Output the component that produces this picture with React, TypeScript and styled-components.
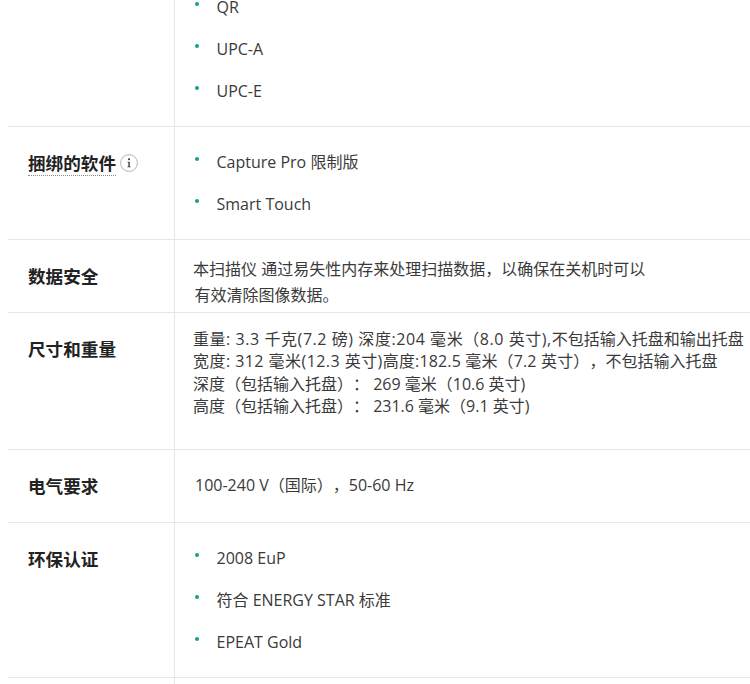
import React from "react";
import styled, { createGlobalStyle } from "styled-components";

const Global = createGlobalStyle`
  html, body { margin: 0; padding: 0; background: #fff; }
  body {
    font-family: "Open Sans", "Noto Sans CJK SC", sans-serif;
    color: #333;
    text-spacing-trim: space-all;
  }
`;

const Viewport = styled.div`
  width: 750px;
  height: 684px;
  overflow: hidden;
  padding-left: 8px;
  box-sizing: border-box;
`;

const Table = styled.div`
  width: 742px;
`;

const Row = styled.div<{ $height: number }>`
  display: grid;
  grid-template-columns: 166px 1fr;
  height: ${(p) => p.$height}px;
  border-bottom: 1px solid #e6e6e6;
  box-sizing: border-box;
`;

const Label = styled.div<{ $top: number }>`
  padding: ${(p) => p.$top}px 0 0 20px;
  font-size: 17.6px;
  line-height: 24px;
  font-weight: 700;
  color: #222;
  display: flex;
  align-items: flex-start;
  gap: 4px;
`;

const Dotted = styled.span`
  border-bottom: 1px dotted #888;
  height: 24px;
`;

const InfoIcon = styled.svg`
  width: 18px;
  height: 18px;
  margin-top: 3px;
  flex: none;
`;

const Cell = styled.div<{ $top: number; $left?: number }>`
  border-left: 1px solid #e6e6e6;
  padding: ${(p) => p.$top}px 0 0 ${(p) => p.$left ?? 18}px;
  font-size: 16px;
  color: #3a3a3a;
`;

const BulletList = styled.ul<{ $shift?: number }>`
  list-style: none;
  margin: ${(p) => p.$shift ?? 0}px 0 0;
  padding: 0;
  display: flex;
  flex-direction: column;
  gap: 18px;
`;

const Bullet = styled.li`
  position: relative;
  padding-left: 23.5px;
  line-height: 24px;
  &::before {
    content: "";
    position: absolute;
    left: 2px;
    top: 7px;
    width: 4px;
    height: 4px;
    border-radius: 50%;
    background: #1a9e8f;
  }
`;

const Para = styled.div<{ $lh: number }>`
  line-height: ${(p) => p.$lh}px;
  font-size: 16px;
  white-space: nowrap;
  margin-right: -8px;
`;

const Tracked = styled.span<{ $spacing: number }>`
  letter-spacing: ${(p) => p.$spacing}px;
`;

const Indented = styled.span`
  margin-left: 1.5px;
`;

function List({ items, shift }: { items: string[]; shift?: number }) {
  return (
    <BulletList $shift={shift}>
      {items.map((t) => (
        <Bullet key={t}>{t}</Bullet>
      ))}
    </BulletList>
  );
}

export default function App() {
  return (
    <Viewport>
      <Global />
      <Table>
        <Row $height={127}>
          <Label $top={0} />
          <Cell $top={0}>
            <List items={["QR", "UPC-A", "UPC-E"]} shift={-5} />
          </Cell>
        </Row>
        <Row $height={113}>
          <Label $top={24}>
            <Dotted>捆绑的软件</Dotted>
            <InfoIcon viewBox="0 0 18 18">
              <circle cx="9" cy="9" r="8.4" fill="#fff" stroke="#b5b5b5" strokeWidth="1" />
              <circle cx="9" cy="5.3" r="1" fill="#333" />
              <path d="M7.6 7.7H9.7V12.4H10.6V13.2H7.4V12.4H8.4V8.5H7.6Z" fill="#333" />
            </InfoIcon>
          </Label>
          <Cell $top={23}>
            <List items={["Capture Pro 限制版", "Smart Touch"]} />
          </Cell>
        </Row>
        <Row $height={73}>
          <Label $top={24}>数据安全</Label>
          <Cell $top={16}>
            <Para $lh={26}>
              本扫描仪 通过易失性内存来处理扫描数据，以确保在关机时可以
              <br />
              <Indented>有效清除图像数据。</Indented>
            </Para>
          </Cell>
        </Row>
        <Row $height={137}>
          <Label $top={24}>尺寸和重量</Label>
          <Cell $top={15}>
            <Para $lh={22.4}>
              <Tracked $spacing={0.56}>重量: 3.3 千克(7.2 磅) 深度:204 毫米（8.0 英寸),</Tracked>
              不包括输入托盘和输出托盘
              <br />
              <Tracked $spacing={0.45}>宽度: 312 毫米(12.3 英寸)</Tracked>
              <Tracked $spacing={0.15}>高度:182.5 毫米（7.2 英寸），</Tracked>
              不包括输入托盘
              <br />
              深度（包括输入托盘）： 269 毫米（10.6 英寸)
              <br />
              高度（包括输入托盘）： 231.6 毫米（9.1 英寸)
            </Para>
          </Cell>
        </Row>
        <Row $height={73}>
          <Label $top={24}>电气要求</Label>
          <Cell $top={23} $left={20}>
            <Para $lh={24}>100-240 V（国际），50-60 Hz</Para>
          </Cell>
        </Row>
        <Row $height={155}>
          <Label $top={24}>环保认证</Label>
          <Cell $top={23}>
            <List items={["2008 EuP", "符合 ENERGY STAR 标准", "EPEAT Gold"]} />
          </Cell>
        </Row>
        <Row $height={20}>
          <Label $top={0} />
          <Cell $top={0} />
        </Row>
      </Table>
    </Viewport>
  );
}
